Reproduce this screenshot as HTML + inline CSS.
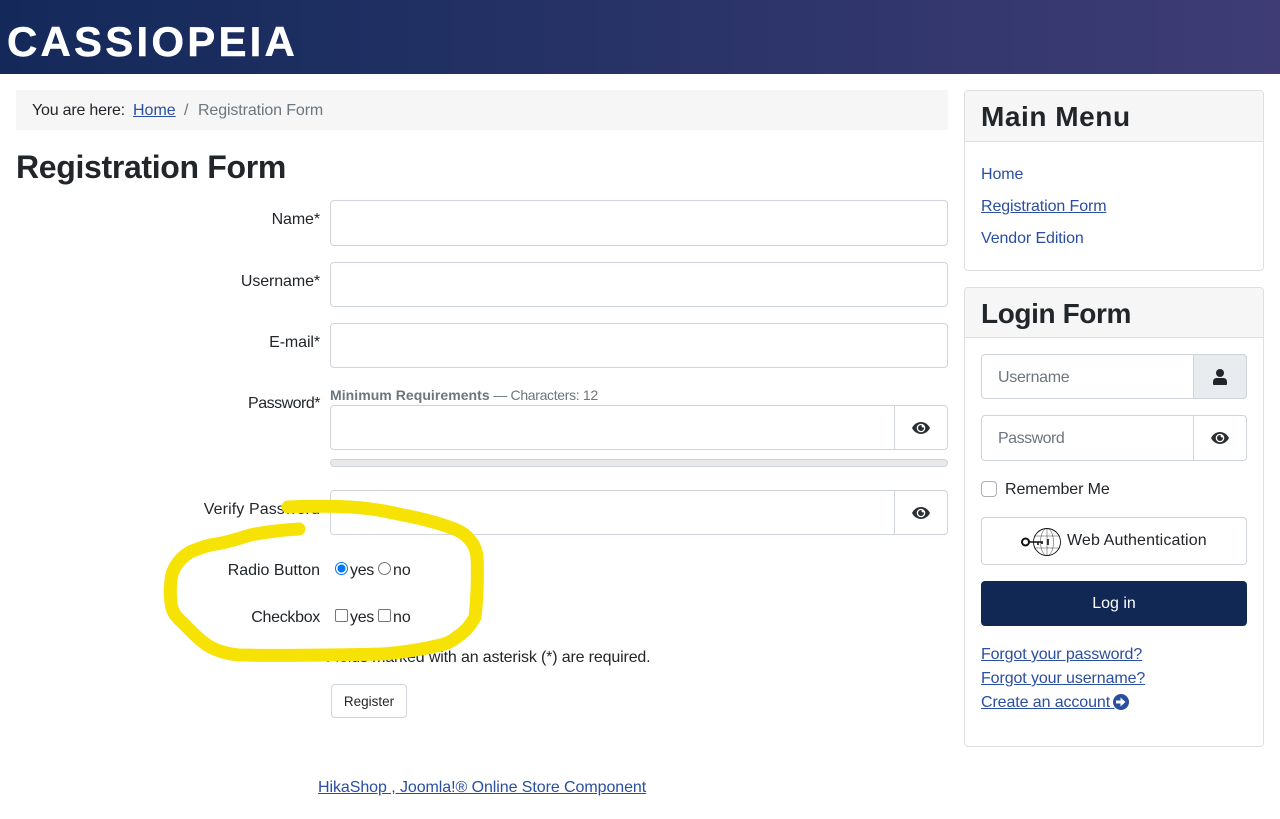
<!DOCTYPE html>
<html lang="en"><head><meta charset="utf-8"><title>Registration Form</title>
<style>
*{box-sizing:border-box}
html,body{margin:0;padding:0;background:#fff}
body{width:1280px;height:819px;position:relative;overflow:hidden;font-family:"Liberation Sans",sans-serif;font-size:16px;color:#22262a}
.t{position:absolute;white-space:nowrap;line-height:24px}
.b{position:absolute;background:#fff;border:1px solid #ced4da;border-radius:4px}
.l{text-align:right;right:960px}
a{color:#2a4ea0;text-decoration:underline}
.m{color:#2a4ea0}
.v{position:absolute;width:1px;background:#ced4da}
.card{position:absolute;left:964px;width:300px;border:1px solid #dfdfdf;border-radius:4px}
.ch{position:absolute;left:0;top:0;width:298px;background:#f6f6f6;border-bottom:1px solid #dfdfdf;border-radius:3px 3px 0 0}
h1,h2{margin:0;position:absolute;white-space:nowrap;font-weight:700;color:#22262a}
.ic{position:absolute}
.cb{position:absolute;width:13px;height:13px;border:1px solid #767676;border-radius:2px;background:#fff}
.ph{color:#6d757d}
</style></head><body>
<div style="position:absolute;left:0;top:0;width:1280px;height:74px;background:linear-gradient(90deg,#14295a 0%,#1f2f62 30%,#3f3c75 100%)"></div>
<div class="t" style="left:7px;top:18px;line-height:48px;font-size:42px;font-weight:700;color:#fff;letter-spacing:3.2px;-webkit-text-stroke:.4px #fff">CASSIOPEIA</div>

<div style="position:absolute;left:16px;top:90px;width:932px;height:40px;background:#f6f6f6"></div>
<div class="t" style="left:32px;top:99px;color:#22262a;letter-spacing:-.2px">You are here:</div>
<a class="t" href="#" style="left:133px;top:99px">Home</a>
<div class="t" style="left:184px;top:99px;color:#6d757d">/</div>
<div class="t" style="left:198px;top:99px;color:#6d757d;letter-spacing:-.12px">Registration Form</div>
<h1 style="left:16px;top:147px;font-size:32px;line-height:40px;letter-spacing:-.33px">Registration Form</h1>

<div class="t l" style="top:208px;letter-spacing:-.1px">Name*</div>
<div class="b" style="left:330px;top:200px;width:618px;height:46px"></div>
<div class="t l" style="top:270px;letter-spacing:-.1px">Username*</div>
<div class="b" style="left:330px;top:262px;width:618px;height:45px"></div>
<div class="t l" style="top:331px;letter-spacing:-.1px">E-mail*</div>
<div class="b" style="left:330px;top:323px;width:618px;height:45px"></div>
<div class="t l" style="top:392px;letter-spacing:-.5px">Password*</div>
<div class="t" style="left:330px;top:383px;font-size:14px;color:#6d757d;letter-spacing:-.32px"><b style="letter-spacing:.05px">Minimum Requirements</b> — Characters: 12</div>
<div class="b" style="left:330px;top:405px;width:618px;height:45px"></div>
<div class="v" style="left:894px;top:405px;height:45px"></div>
<svg class="ic" style="left:912px;top:421px" width="18" height="14" viewBox="0 0 18 14"><path fill="#2b2f33" d="M9 1C5 1 1.800 3.600 .2 6.600a.9.9 0 0 0 0 .8C1.800 10.400 5 13 9 13s7.200-2.600 8.800-5.600a.9.9 0 0 0 0-.8C16.200 3.600 13 1 9 1zm0 10.300A4.300 4.300 0 1 1 9 2.700a4.300 4.300 0 0 1 0 8.600zM9 4a3 3 0 1 0 3 3c0-.3-.1-.6-.1-.8A1.500 1.500 0 0 1 9.800 4.100 3 3 0 0 0 9 4z"/></svg>
<div style="position:absolute;left:330px;top:459px;width:618px;height:8px;background:#e9e9e9;border:1px solid #ced4da;border-radius:4px"></div>
<div class="t l" style="top:498px;letter-spacing:.1px">Verify Password</div>
<div class="b" style="left:330px;top:490px;width:618px;height:45px"></div>
<div class="v" style="left:894px;top:490px;height:45px"></div>
<svg class="ic" style="left:912px;top:506px" width="18" height="14" viewBox="0 0 18 14"><path fill="#2b2f33" d="M9 1C5 1 1.800 3.600 .2 6.600a.9.9 0 0 0 0 .8C1.800 10.400 5 13 9 13s7.200-2.600 8.800-5.600a.9.9 0 0 0 0-.8C16.200 3.600 13 1 9 1zm0 10.300A4.300 4.300 0 1 1 9 2.700a4.300 4.300 0 0 1 0 8.600zM9 4a3 3 0 1 0 3 3c0-.3-.1-.6-.1-.8A1.500 1.500 0 0 1 9.800 4.100 3 3 0 0 0 9 4z"/></svg>

<div class="t l" style="top:559px;letter-spacing:-.02px">Radio Button</div>
<svg class="ic" style="left:335px;top:562px" width="13" height="13" viewBox="0 0 13 13"><circle cx="6.500" cy="6.500" r="6" fill="#fff" stroke="#0075ff"/><circle cx="6.500" cy="6.500" r="4" fill="#0075ff"/></svg>
<div class="t" style="left:350px;top:559px;letter-spacing:-.3px">yes</div>
<svg class="ic" style="left:378px;top:562px" width="13" height="13" viewBox="0 0 13 13"><circle cx="6.500" cy="6.500" r="6" fill="#fff" stroke="#767676"/></svg>
<div class="t" style="left:393px;top:559px">no</div>
<div class="t l" style="top:606px;letter-spacing:-.3px">Checkbox</div>
<div class="cb" style="left:335px;top:609px"></div>
<div class="t" style="left:350px;top:606px;letter-spacing:-.3px">yes</div>
<div class="cb" style="left:378px;top:609px"></div>
<div class="t" style="left:393px;top:606px">no</div>
<div class="t" style="left:326px;top:646px;letter-spacing:-.15px">Fields marked with an asterisk (*) are required.</div>
<div class="b" style="left:331px;top:684px;width:76px;height:34px;text-align:center;font-size:13.5px;line-height:33px">Register</div>
<a class="t" href="#" style="left:318px;top:776px;letter-spacing:-.07px">HikaShop , Joomla!® Online Store Component</a>

<svg class="ic" style="left:0;top:0" width="1280" height="819" viewBox="0 0 1280 819"><path d="M288 507C310 506 330 506 350 507C370 508 385 511 403 515C425 519 442 524 457 530C468 535 476 545 477 557C478 575 477 600 475 617C470 626 465 632 457 637C452 641 447 644 440 645C425 649 405 652 383 654C340 655 285 656 240 655C225 654 215 650 207 645C197 638 190 630 183 623C176 617 172 612 171 603C170 595 170 588 171 580C172 568 180 558 190 552C197 549 203 547 210 545C225 543 238 539 250 535C265 532 283 530 299 529" fill="none" stroke="#f6e205" stroke-width="13" stroke-linecap="round" stroke-linejoin="round"/></svg>

<div class="card" style="top:90px;height:181px"><div class="ch" style="height:51px"></div></div>
<h2 style="left:981px;top:99px;font-size:28px;line-height:36px;letter-spacing:.55px">Main Menu</h2>
<div class="t m" style="left:981px;top:163px;letter-spacing:-.1px">Home</div>
<a class="t" href="#" style="left:981px;top:195px;letter-spacing:-.1px">Registration Form</a>
<div class="t m" style="left:981px;top:227px;letter-spacing:-.1px">Vendor Edition</div>

<div class="card" style="top:287px;height:460px"><div class="ch" style="height:50px"></div></div>
<h2 style="left:981px;top:296px;font-size:28px;line-height:36px;letter-spacing:-.4px">Login Form</h2>
<div class="b" style="left:981px;top:354px;width:266px;height:45px"></div>
<div class="t ph" style="left:998px;top:366px;letter-spacing:-.3px">Username</div>
<div style="position:absolute;left:1193px;top:354px;width:54px;height:45px;background:#e9ecef;border:1px solid #ced4da;border-radius:0 4px 4px 0"></div>
<svg class="ic" style="left:1213px;top:369px" width="14" height="16" viewBox="0 0 14 16"><circle cx="7" cy="4" r="4" fill="#22262a"/><path fill="#22262a" d="M3.500 9h7A3.500 3.500 0 0 1 14 12.500V15a1 1 0 0 1-1 1H1a1 1 0 0 1-1-1v-2.500A3.500 3.500 0 0 1 3.500 9z"/></svg>
<div class="b" style="left:981px;top:415px;width:266px;height:46px"></div>
<div class="v" style="left:1193px;top:415px;height:46px"></div>
<div class="t ph" style="left:998px;top:427px;letter-spacing:-.5px">Password</div>
<svg class="ic" style="left:1211px;top:431px" width="18" height="14" viewBox="0 0 18 14"><path fill="#2b2f33" d="M9 1C5 1 1.800 3.600 .2 6.600a.9.9 0 0 0 0 .8C1.800 10.400 5 13 9 13s7.200-2.600 8.800-5.600a.9.9 0 0 0 0-.8C16.200 3.600 13 1 9 1zm0 10.300A4.300 4.300 0 1 1 9 2.700a4.300 4.300 0 0 1 0 8.600zM9 4a3 3 0 1 0 3 3c0-.3-.1-.6-.1-.8A1.500 1.500 0 0 1 9.800 4.100 3 3 0 0 0 9 4z"/></svg>
<div class="b" style="left:981px;top:481px;width:16px;height:16px;border-color:#a9afb5"></div>
<div class="t" style="left:1005px;top:478px;letter-spacing:-.1px">Remember Me</div>
<div class="b" style="left:981px;top:517px;width:266px;height:48px"></div>
<svg class="ic" style="left:1020px;top:527px" width="42" height="30" viewBox="0 0 42 30"><g fill="none" stroke="#111"><circle cx="27" cy="15" r="13.500" stroke-width=".9"/><ellipse cx="27" cy="15" rx="6.500" ry="13.500" stroke-width=".4"/><path stroke-width=".4" d="M27 1.500v27M14 9h26M14 21h26"/><circle cx="5.500" cy="15" r="3.500" stroke-width="2"/><path stroke-width="1.600" d="M9 15h14M18 15v3M22 15v2M28 12v6"/></g></svg>
<div class="t" style="left:1067px;top:529px;letter-spacing:.12px">Web Authentication</div>
<div style="position:absolute;left:981px;top:581px;width:266px;height:45px;background:#112855;border-radius:4px;color:#fff;text-align:center;line-height:46px">Log in</div>
<a class="t" href="#" style="left:981px;top:643px;letter-spacing:-.12px">Forgot your password?</a>
<a class="t" href="#" style="left:981px;top:667px;letter-spacing:-.1px">Forgot your username?</a>
<a class="t" href="#" style="left:981px;top:691px;letter-spacing:-.1px;white-space:pre">Create an account&nbsp;</a>
<svg class="ic" style="left:1113px;top:694px" width="16" height="16" viewBox="0 0 16 16"><circle cx="8" cy="8" r="8" fill="#2a4ea0"/><path fill="#fff" d="M3 6.500h4.500V3.500L12.500 8l-5 4.500v-3H3z"/></svg>
</body></html>
